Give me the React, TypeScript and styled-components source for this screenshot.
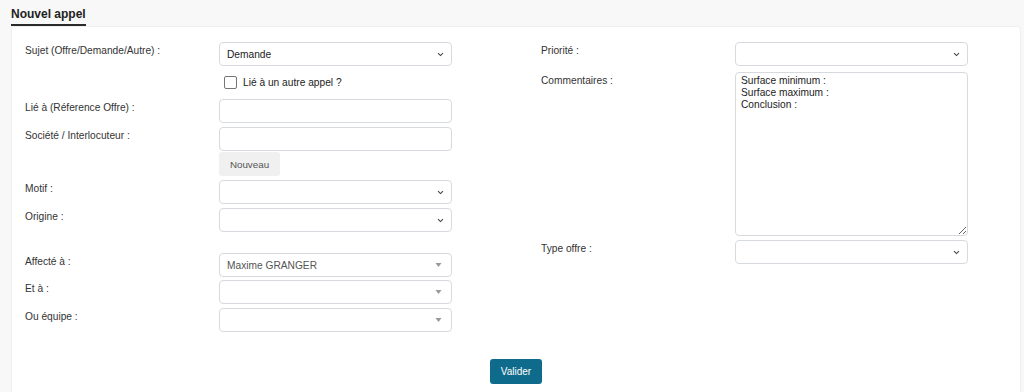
import React from 'react';
import styled, { createGlobalStyle } from 'styled-components';

const GlobalStyle = createGlobalStyle`
  html, body {
    margin: 0;
    padding: 0;
    background: #f8f8f8;
    font-family: "Liberation Sans", Arial, sans-serif;
    color: #333;
  }
`;

const Page = styled.div`
  padding: 0 3px 0 11px;
  height: 392px;
  overflow: hidden;
`;

const TabBar = styled.div`
  height: 26px;
  display: flex;
  align-items: flex-end;
`;

const Tab = styled.div`
  font-size: 12px;
  font-weight: bold;
  color: #222;
  line-height: 14px;
  padding-bottom: 3px;
  border-bottom: 2px solid #2a2a2a;
`;

const Panel = styled.div`
  background: #fff;
  border: 1px solid #efefef;
  border-radius: 4px;
  padding: 15px 13px 40px;
`;

const Columns = styled.div`
  display: grid;
  grid-template-columns: 516px 1fr;
`;

const Column = styled.div`
  display: flex;
  flex-direction: column;
`;

const Row = styled.div<{ $mb?: number }>`
  display: grid;
  grid-template-columns: 194px 233px;
  align-items: start;
  margin-bottom: ${p => p.$mb ?? 4}px;
`;

const Label = styled.div`
  font-size: 10.2px;
  line-height: 12px;
  padding-top: 3px;
  color: #333;
`;

const Field = styled.div<{ $muted?: boolean }>`
  box-sizing: border-box;
  height: 24px;
  border: 1px solid #d6dadf;
  border-radius: 4px;
  background: #fff;
  display: flex;
  align-items: center;
  justify-content: space-between;
  padding: 0 ${p => (p.$muted ? 9 : 7)}px 0 7px;
  font-size: 10.2px;
  color: ${p => (p.$muted ? '#555' : '#222')};
`;

const TextArea = styled.textarea`
  box-sizing: border-box;
  width: 233px;
  height: 164px;
  border: 1px solid #d6dadf;
  border-radius: 4px;
  padding: 2px 5px;
  font-family: "Liberation Sans", Arial, sans-serif;
  font-size: 10.2px;
  line-height: 12px;
  color: #222;
  resize: vertical;
  outline: none;
`;

const CheckRow = styled.label`
  grid-column: 2;
  box-sizing: border-box;
  display: flex;
  align-items: center;
  gap: 6px;
  height: 29px;
  padding: 4px 0 0 5px;
  font-size: 10.2px;
  color: #222;
`;

const Box = styled.span`
  box-sizing: border-box;
  width: 13px;
  height: 13px;
  border: 1px solid #767676;
  border-radius: 2px;
  background: #fff;
`;

const GreyButton = styled.button`
  grid-column: 2;
  justify-self: start;
  width: 61px;
  height: 24px;
  border: none;
  border-radius: 3px;
  background: #f0f0f0;
  color: #555;
  font-family: "Liberation Sans", Arial, sans-serif;
  font-size: 9.8px;
`;

const Footer = styled.div`
  display: flex;
  justify-content: center;
  margin-top: 23px;
`;

const PrimaryButton = styled.button`
  width: 52px;
  height: 25px;
  border: none;
  border-radius: 3px;
  background: #0f6b8c;
  color: #fff;
  font-family: "Liberation Sans", Arial, sans-serif;
  font-size: 10px;
`;

const Chevron = () => (
  <svg width="7" height="5" viewBox="0 0 7 5">
    <path d="M1 1.2 L3.5 3.6 L6 1.2" fill="none" stroke="#444" strokeWidth="1.1" />
  </svg>
);

const Caret = () => (
  <svg width="7" height="4" viewBox="0 0 7 4">
    <path d="M0.5 0 L6.5 0 L3.5 4 Z" fill="#999" />
  </svg>
);

function Select({ value }: { value?: string }) {
  return (
    <Field>
      <span>{value}</span>
      <Chevron />
    </Field>
  );
}

function Select2({ value }: { value?: string }) {
  return (
    <Field $muted>
      <span>{value}</span>
      <Caret />
    </Field>
  );
}

export default function App() {
  return (
    <Page>
      <GlobalStyle />
      <TabBar>
        <Tab>Nouvel appel</Tab>
      </TabBar>
      <Panel>
        <Columns>
          <Column>
            <Row $mb={0}>
              <Label>Sujet (Offre/Demande/Autre) :</Label>
              <Select value="Demande" />
            </Row>
            <Row>
              <CheckRow>
                <Box />
                Lié à un autre appel ?
              </CheckRow>
            </Row>
            <Row>
              <Label>Lié à (Réference Offre) :</Label>
              <Field />
            </Row>
            <Row $mb={1}>
              <Label>Société / Interlocuteur :</Label>
              <Field />
            </Row>
            <Row>
              <GreyButton>Nouveau</GreyButton>
            </Row>
            <Row>
              <Label>Motif :</Label>
              <Select />
            </Row>
            <Row $mb={21}>
              <Label>Origine :</Label>
              <Select />
            </Row>
            <Row $mb={3}>
              <Label>Affecté à :</Label>
              <Select2 value="Maxime GRANGER" />
            </Row>
            <Row>
              <Label>Et à :</Label>
              <Select2 />
            </Row>
            <Row>
              <Label>Ou équipe :</Label>
              <Select2 />
            </Row>
          </Column>
          <Column>
            <Row $mb={6}>
              <Label>Priorité :</Label>
              <Select />
            </Row>
            <Row>
              <Label>Commentaires :</Label>
              <TextArea defaultValue={'Surface minimum :\nSurface maximum :\nConclusion :'} />
            </Row>
            <Row>
              <Label>Type offre :</Label>
              <Select />
            </Row>
          </Column>
        </Columns>
        <Footer>
          <PrimaryButton>Valider</PrimaryButton>
        </Footer>
      </Panel>
    </Page>
  );
}
